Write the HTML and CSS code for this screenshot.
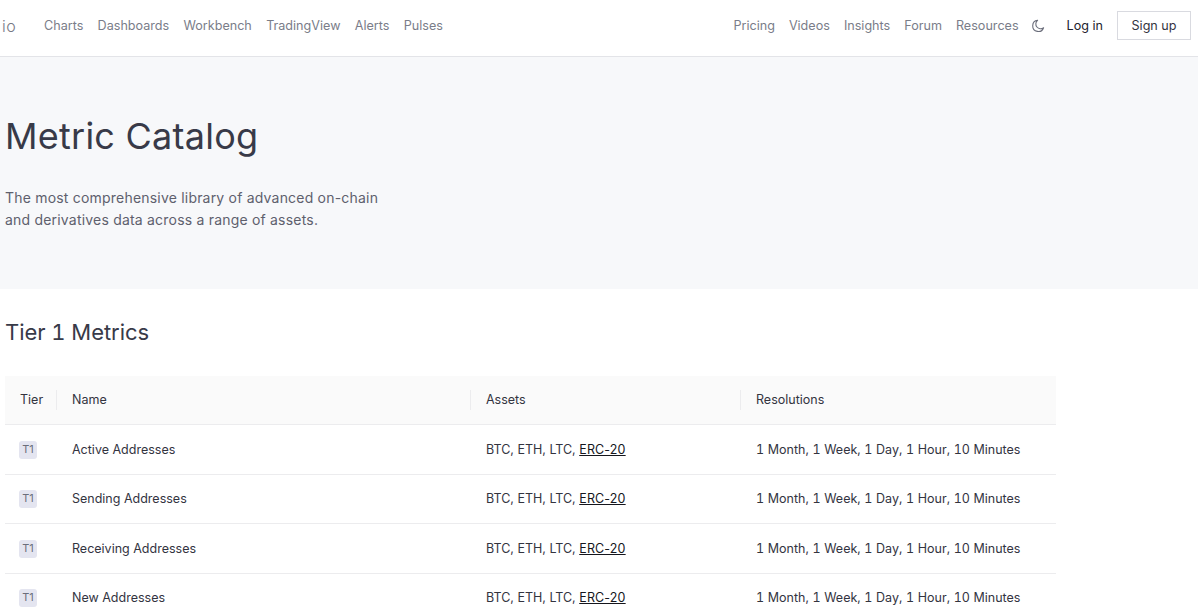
FILE: index.html
```html
<!DOCTYPE html>
<html>
<head>
    <meta charset="utf-8">
    <title>Metric Catalog</title>
    <link rel="stylesheet" href="styles.css">
</head>
<body>
    <header class="navbar">
        <span class="logo">io</span>
        <nav class="nav-left">
            <a href="#">Charts</a>
            <a href="#">Dashboards</a>
            <a href="#">Workbench</a>
            <a href="#">TradingView</a>
            <a href="#">Alerts</a>
            <a href="#">Pulses</a>
        </nav>
        <nav class="nav-right">
            <a href="#">Pricing</a>
            <a href="#">Videos</a>
            <a href="#">Insights</a>
            <a href="#">Forum</a>
            <a href="#">Resources</a>
            <svg class="moon" width="14" height="14" viewBox="0 0 14 14" fill="none" stroke="#6b6e7b" stroke-width="1.1" stroke-linecap="round" stroke-linejoin="round">
                <path d="M6.6 1.3a5.6 5.6 0 1 0 6 7.4 4.6 4.6 0 0 1-6-7.4z"/>
            </svg>
            <a href="#" class="login">Log in</a>
            <a href="#" class="signup">Sign up</a>
        </nav>
    </header>

    <section class="hero">
        <h1>Metric Catalog</h1>
        <p>The most comprehensive library of advanced on-chain<br>and derivatives data across a range of assets.</p>
    </section>

    <main class="content">
        <h2>Tier 1 Metrics</h2>
        <table class="metrics">
            <thead>
                <tr>
                    <th class="col-tier"><span>Tier</span></th>
                    <th class="col-name"><span>Name</span></th>
                    <th class="col-assets"><span>Assets</span></th>
                    <th class="col-res"><span>Resolutions</span></th>
                </tr>
            </thead>
            <tbody>
                <tr>
                    <td><span class="tier-tag">T1</span></td>
                    <td>Active Addresses</td>
                    <td>BTC, ETH, LTC, <a href="#">ERC-20</a></td>
                    <td class="res">1 Month, 1 Week, 1 Day, 1 Hour, 10 Minutes</td>
                </tr>
                <tr>
                    <td><span class="tier-tag">T1</span></td>
                    <td>Sending Addresses</td>
                    <td>BTC, ETH, LTC, <a href="#">ERC-20</a></td>
                    <td class="res">1 Month, 1 Week, 1 Day, 1 Hour, 10 Minutes</td>
                </tr>
                <tr>
                    <td><span class="tier-tag">T1</span></td>
                    <td>Receiving Addresses</td>
                    <td>BTC, ETH, LTC, <a href="#">ERC-20</a></td>
                    <td class="res">1 Month, 1 Week, 1 Day, 1 Hour, 10 Minutes</td>
                </tr>
                <tr>
                    <td><span class="tier-tag">T1</span></td>
                    <td>New Addresses</td>
                    <td>BTC, ETH, LTC, <a href="#">ERC-20</a></td>
                    <td class="res">1 Month, 1 Week, 1 Day, 1 Hour, 10 Minutes</td>
                </tr>
            </tbody>
        </table>
    </main>
</body>
</html>
```

FILE: styles.css
```css
/* General body styling */
html, body {
    height: 611px;
    overflow: hidden;
}

body {
    font-family: Inter, "Liberation Sans", sans-serif;
    background-color: #fff;
    color: #33343f;
    margin: 0;
    padding: 0;
}

a {
    text-decoration: none;
    color: inherit;
}

/* Top navigation */
.navbar {
    display: flex;
    align-items: center;
    height: 51px;
    border-bottom: 1px solid #e3e4e8;
    padding: 0 7px 5px 2px;
    font-size: 12.6px;
}

.logo {
    width: 42px;
    font-size: 16px;
    font-weight: 300;
    letter-spacing: 0.6px;
    color: #777985;
}

.nav-left,
.nav-right {
    display: flex;
    align-items: center;
    gap: 14.3px;
    color: #7a7d89;
}

.nav-right {
    gap: 14px;
    margin-left: auto;
}

.moon {
    margin-left: -2px;
}

.login {
    color: #22232e;
    margin-left: 8px;
}

.signup {
    color: #33343f;
    border: 1px solid #d9dae0;
    padding: 6px 13.5px;
    line-height: 15px;
}

/* Hero block */
.hero {
    height: 232px;
    box-sizing: border-box;
    background-color: #f7f8fa;
    padding: 57px 5px 0;
}

.hero h1 {
    font-size: 36px;
    font-weight: 400;
    line-height: 44px;
    letter-spacing: 0.25px;
    color: #383a48;
    margin: 0 0 29px;
}

.hero p {
    font-size: 14px;
    line-height: 22px;
    letter-spacing: 0.2px;
    color: #5e606d;
    margin: 0;
}

/* Table section */
.content {
    padding: 29px 5px 0;
}

.content h2 {
    font-size: 22px;
    font-weight: 400;
    line-height: 28px;
    font-variant-numeric: tabular-nums;
    letter-spacing: -0.05px;
    color: #383a48;
    margin: 0 0 30px;
}

.metrics {
    width: 1051px;
    border-collapse: collapse;
    table-layout: fixed;
    font-size: 12.5px;
}

.metrics th {
    height: 48px;
    padding: 0;
    background-color: #fafafa;
    border-bottom: 1px solid #ececee;
    font-weight: 400;
    text-align: left;
    color: #33343f;
}

.metrics th span {
    display: block;
    height: 20px;
    line-height: 20px;
    padding-left: 15px;
    border-left: 1px solid #ececee;
}

.metrics th.col-tier span {
    border-left: none;
}

.col-tier { width: 51px; }
.col-name { width: 414px; }
.col-assets { width: 270px; }

.metrics td {
    height: 49px;
    padding: 0 0 0 16px;
    border-bottom: 1px solid #ececee;
    color: #33343f;
}

.metrics td:first-child {
    padding-left: 14px;
}

.metrics tr:nth-child(even) td {
    height: 46px;
    padding-bottom: 2px;
}

/* tag sits a pixel lower than the text on the short rows */
.metrics tr:nth-child(even) td:first-child {
    height: 48px;
    padding-bottom: 0;
}

.metrics td.res {
    font-variant-numeric: tabular-nums;
    word-spacing: 0.3px;
}

.metrics td a {
    color: #15161d;
    letter-spacing: 0.15px;
    text-decoration: underline;
}

.tier-tag {
    display: inline-block;
    width: 18px;
    height: 18px;
    line-height: 17px;
    text-align: center;
    font-size: 11px;
    color: #6b6e7b;
    background-color: #e4e5f0;
    border-radius: 3px;
}
```
